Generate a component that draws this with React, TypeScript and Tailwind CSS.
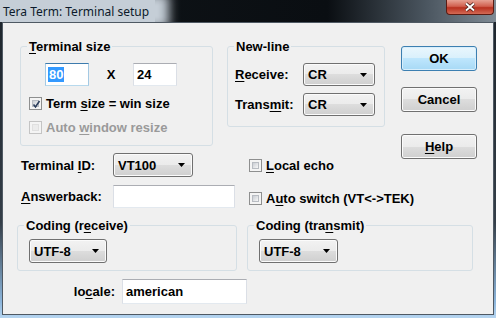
import React from "react";

// Win7-style helpers
function U({ children }: { children: React.ReactNode }) {
  return <span className="underline underline-offset-[2px] decoration-1">{children}</span>;
}

function Edit({
  w,
  h,
  focused,
  children,
}: {
  w: string;
  h: string;
  focused?: boolean;
  children?: React.ReactNode;
}) {
  return (
    <div
      className={`${w} ${h} flex items-center pl-[2px] bg-white border ${
        focused
          ? "border-t-[#3d7bad] border-x-[#a4c9e3] border-b-[#b7d9ed]"
          : "border-t-[#abadb3] border-x-[#dbdfe6] border-b-[#e3e9ef]"
      }`}
    >
      {children}
    </div>
  );
}

function Arrow() {
  return (
    <svg width="7" height="4" viewBox="0 0 7 4" className="shrink-0">
      <path d="M0 0h7L3.5 4z" fill="#000" />
    </svg>
  );
}

function Combo({ w, h, value }: { w: string; h: string; value: string }) {
  return (
    <div
      className={`${w} ${h} flex items-center justify-between pl-[4px] pr-[7px] rounded-[3px] border border-[#707070] shadow-[inset_0_0_0_1px_#fbfbfb] bg-[linear-gradient(#f2f2f2,#ebebeb_50%,#dddddd_50%,#cfcfcf)]`}
    >
      <span>{value}</span>
      <Arrow />
    </div>
  );
}

function Button({ children, def }: { children: React.ReactNode; def?: boolean }) {
  return (
    <div
      className={`w-[76px] h-[25px] flex items-center justify-center rounded-[3px] border ${
        def
          ? "border-[#3c7fb1] shadow-[inset_0_0_0_1px_#d8eefb] bg-[linear-gradient(#eaf6fd,#d9f0fc_50%,#bee6fd_50%,#a7d9f5)]"
          : "border-[#707070] shadow-[inset_0_0_0_1px_#fbfbfb] bg-[linear-gradient(#f2f2f2,#ebebeb_50%,#dddddd_50%,#cfcfcf)]"
      }`}
    >
      {children}
    </div>
  );
}

function Check({ checked, disabled }: { checked?: boolean; disabled?: boolean }) {
  return (
    <div
      className={`w-[13px] h-[13px] shrink-0 p-[2px] border ${
        disabled ? "border-[#c4c4c4] bg-[#f4f4f4]" : "border-[#8e8f8f] bg-[#f4f4f4]"
      }`}
    >
      <div
        className={`w-full h-full relative ${
          disabled
            ? "bg-[#ececec] border border-[#e0e0e0]"
            : "bg-[linear-gradient(135deg,#c9cdd3,#f7f7f7)] border border-[#b8bcc2]"
        }`}
      >
        {checked && (
          <svg width="11" height="11" viewBox="0 0 11 11" className="absolute -left-[2px] -top-[2px]">
            <path d="M2.5 5.5l2 2.5 4-6" fill="none" stroke="#2c3e5c" strokeWidth="1.6" />
          </svg>
        )}
      </div>
    </div>
  );
}

function CheckRow({
  checked,
  disabled,
  children,
}: {
  checked?: boolean;
  disabled?: boolean;
  children: React.ReactNode;
}) {
  return (
    <div className={`h-[13px] flex items-center gap-[4px] ${disabled ? "text-[#9a9a9a]" : ""}`}>
      <Check checked={checked} disabled={disabled} />
      <span>{children}</span>
    </div>
  );
}

function Group({
  title,
  className,
  children,
}: {
  title: React.ReactNode;
  className: string;
  children?: React.ReactNode;
}) {
  return (
    <fieldset className={`${className} border border-[#d5dfe5] rounded-[3px]`}>
      <legend className="ml-[6px] px-[2px] leading-[15px]">{title}</legend>
      {children}
    </fieldset>
  );
}

export default function App() {
  return (
    <div className="w-[496px] h-[318px] overflow-hidden flex flex-col bg-[linear-gradient(#1c232a,#343e48_70%,#8db6dc_95%,#b6d5f0)] [font-family:'Liberation_Sans',Arial,sans-serif] text-[13px] leading-[15px] font-bold text-black">
      {/* Title bar */}
      <div className="h-[22px] shrink-0 flex items-start overflow-hidden bg-[linear-gradient(to_right,#0f1418,#0a0e12_66%,#4b5660_86%,#7f8a94)]">
        <div className="h-[22px] flex items-center pl-[3px] pr-[6px] bg-[#c5ced7] shadow-[8px_0_10px_6px_#c5ced7] [font-family:'Noto_Sans',sans-serif] font-normal text-[12px] text-[#0c1a2a]">
          Tera Term: Terminal setup
        </div>
        <div className="ml-auto mr-[2px] w-[48px] h-[15px] flex items-center justify-center rounded-b-[4px] border border-t-0 border-[#5b1b12] bg-[linear-gradient(#e6a193,#d1604f_45%,#b8301f_55%,#d36a55)]">
          <svg width="12" height="10" viewBox="0 0 12 10">
            <path d="M2 1.5l8 7M10 1.5l-8 7" stroke="#3a1410" strokeWidth="3.4" />
            <path d="M2 1.5l8 7M10 1.5l-8 7" stroke="#fff" strokeWidth="2" />
          </svg>
        </div>
      </div>

      {/* Client area */}
      <div className="mx-[2px] h-[293px] shrink-0 border border-[#4f5963] bg-[#f0f0f0] flex flex-col">
        {/* Top section */}
        <div className="h-[123px] flex items-start pt-[16px] pl-[17px]">
          <Group
            className="w-[193px] h-[107px]"
            title={
              <>
                <U>T</U>erminal size
              </>
            }
          >
            <div className="mt-[9px] ml-[24px] flex items-center">
              <Edit w="w-[44px]" h="h-[23px]" focused>
                <span className="bg-[#3399ff] text-white px-[1px]">80</span>
              </Edit>
              <span className="w-[44px] text-center">X</span>
              <Edit w="w-[44px]" h="h-[23px]">
                <span className="px-[1px]">24</span>
              </Edit>
            </div>
            <div className="mt-[11px] ml-[8px]">
              <CheckRow checked>
                Term <U>s</U>ize = win size
              </CheckRow>
            </div>
            <div className="mt-[11px] ml-[8px]">
              <CheckRow disabled>
                Auto <U>w</U>indow resize
              </CheckRow>
            </div>
          </Group>

          <Group className="ml-[14px] w-[158px] h-[88px]" title="New-line">
            <div className="mt-[9px] pl-[7px] flex items-center">
              <span className="w-[68px]">
                <U>R</U>eceive:
              </span>
              <Combo w="w-[72px]" h="h-[23px]" value="CR" />
            </div>
            <div className="mt-[7px] pl-[7px] flex items-center">
              <span className="w-[68px]">
                Trans<U>m</U>it:
              </span>
              <Combo w="w-[72px]" h="h-[23px]" value="CR" />
            </div>
          </Group>

          <div className="ml-[16px] mt-[7px] flex flex-col">
            <Button def>OK</Button>
            <div className="mt-[16px]">
              <Button>Cancel</Button>
            </div>
            <div className="mt-[22px]">
              <Button>
                <U>H</U>elp
              </Button>
            </div>
          </div>
        </div>

        {/* Terminal ID / Answerback */}
        <div className="mt-[7px] pl-[18px] h-[24px] flex items-center">
          <span className="w-[92px]">
            Terminal <U>I</U>D:
          </span>
          <Combo w="w-[80px]" h="h-[24px]" value="VT100" />
          <div className="ml-[56px]">
            <CheckRow>
              <U>L</U>ocal echo
            </CheckRow>
          </div>
        </div>
        <div className="mt-[8px] pl-[18px] h-[23px] flex items-center">
          <span className="w-[92px]">
            <U>A</U>nswerback:
          </span>
          <Edit w="w-[122px]" h="h-[23px]" />
          <div className="ml-[14px] pt-[3px]">
            <CheckRow>
              A<U>u</U>to switch (VT&lt;-&gt;TEK)
            </CheckRow>
          </div>
        </div>

        {/* Coding groups */}
        <div className="mt-[10px] pl-[14px] flex items-start">
          <Group
            className="w-[220px] h-[53px]"
            title={
              <>
                Coding (r<U>e</U>ceive)
              </>
            }
          >
            <div className="mt-[6px] ml-[11px]">
              <Combo w="w-[78px]" h="h-[24px]" value="UTF-8" />
            </div>
          </Group>
          <Group
            className="ml-[10px] w-[226px] h-[53px]"
            title={
              <>
                Coding (tra<U>n</U>smit)
              </>
            }
          >
            <div className="mt-[6px] ml-[11px]">
              <Combo w="w-[79px]" h="h-[24px]" value="UTF-8" />
            </div>
          </Group>
        </div>

        {/* locale */}
        <div className="mt-[8px] flex items-center">
          <span className="w-[112px] text-right">
            lo<U>c</U>ale:
          </span>
          <div className="ml-[7px]">
            <Edit w="w-[125px]" h="h-[25px]">
              <span className="px-[1px]">american</span>
            </Edit>
          </div>
        </div>
      </div>
    </div>
  );
}
